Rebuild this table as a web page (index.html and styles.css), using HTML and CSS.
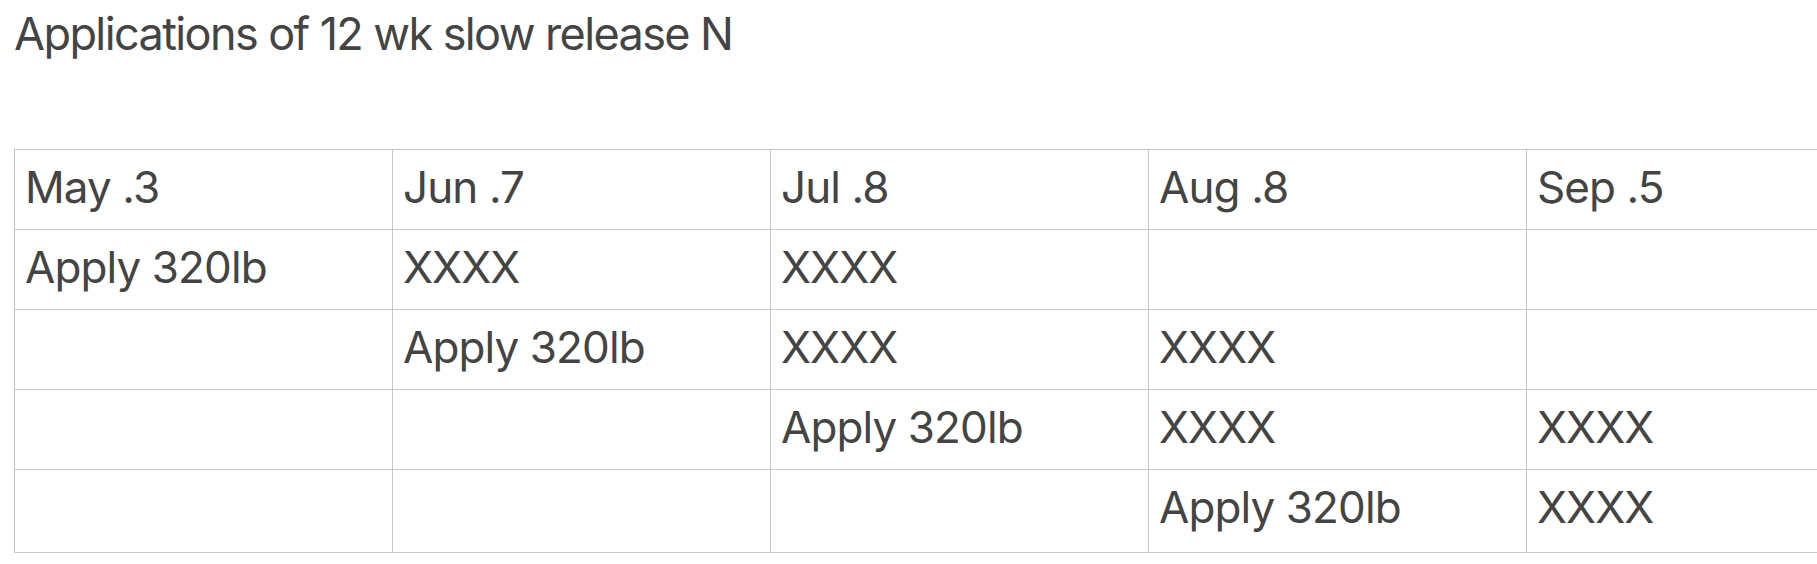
FILE: index.html
```html
<!DOCTYPE html>
<html>
<head>
<meta charset="utf-8">
<link rel="stylesheet" href="styles.css">
</head>
<body>
<div class="page">
  <h1 class="title">Applications of 12 wk slow release N</h1>
  <table class="grid">
    <colgroup><col><col><col><col><col></colgroup>
    <tr><td>May .3</td><td>Jun .7</td><td>Jul .8</td><td>Aug .8</td><td>Sep .5</td></tr>
    <tr><td>Apply 320lb</td><td>XXXX</td><td>XXXX</td><td></td><td></td></tr>
    <tr><td></td><td>Apply 320lb</td><td>XXXX</td><td>XXXX</td><td></td></tr>
    <tr><td></td><td></td><td>Apply 320lb</td><td>XXXX</td><td>XXXX</td></tr>
    <tr class="last"><td></td><td></td><td></td><td>Apply 320lb</td><td>XXXX</td></tr>
  </table>
</div>
</body>
</html>
```
FILE: styles.css
```css
html, body {
  margin: 0;
  padding: 0;
  background: #ffffff;
  overflow: hidden;
}
.page {
  padding-left: 14px;
  font-family: Inter, "Noto Sans", sans-serif;
  color: #444444;
}
.title {
  margin: 0;
  padding-top: 7px;
  box-sizing: border-box;
  height: 149px;
  font-size: 45px;
  font-weight: 400;
  line-height: 54px;
  letter-spacing: -1.6px;
}
.grid {
  border-collapse: collapse;
  table-layout: fixed;
  width: 1890px;
  font-size: 44px;
  letter-spacing: -0.9px;
}
.grid col {
  width: 378px;
}
.grid td {
  border: 1px solid #c6c6c6;
  height: 80px;
  padding: 0 10px 4px 10px;
  box-sizing: border-box;
  vertical-align: middle;
  white-space: nowrap;
  line-height: 53px;
}
.grid tr.last td {
  height: 83px;
  padding-bottom: 7px;
}
```
